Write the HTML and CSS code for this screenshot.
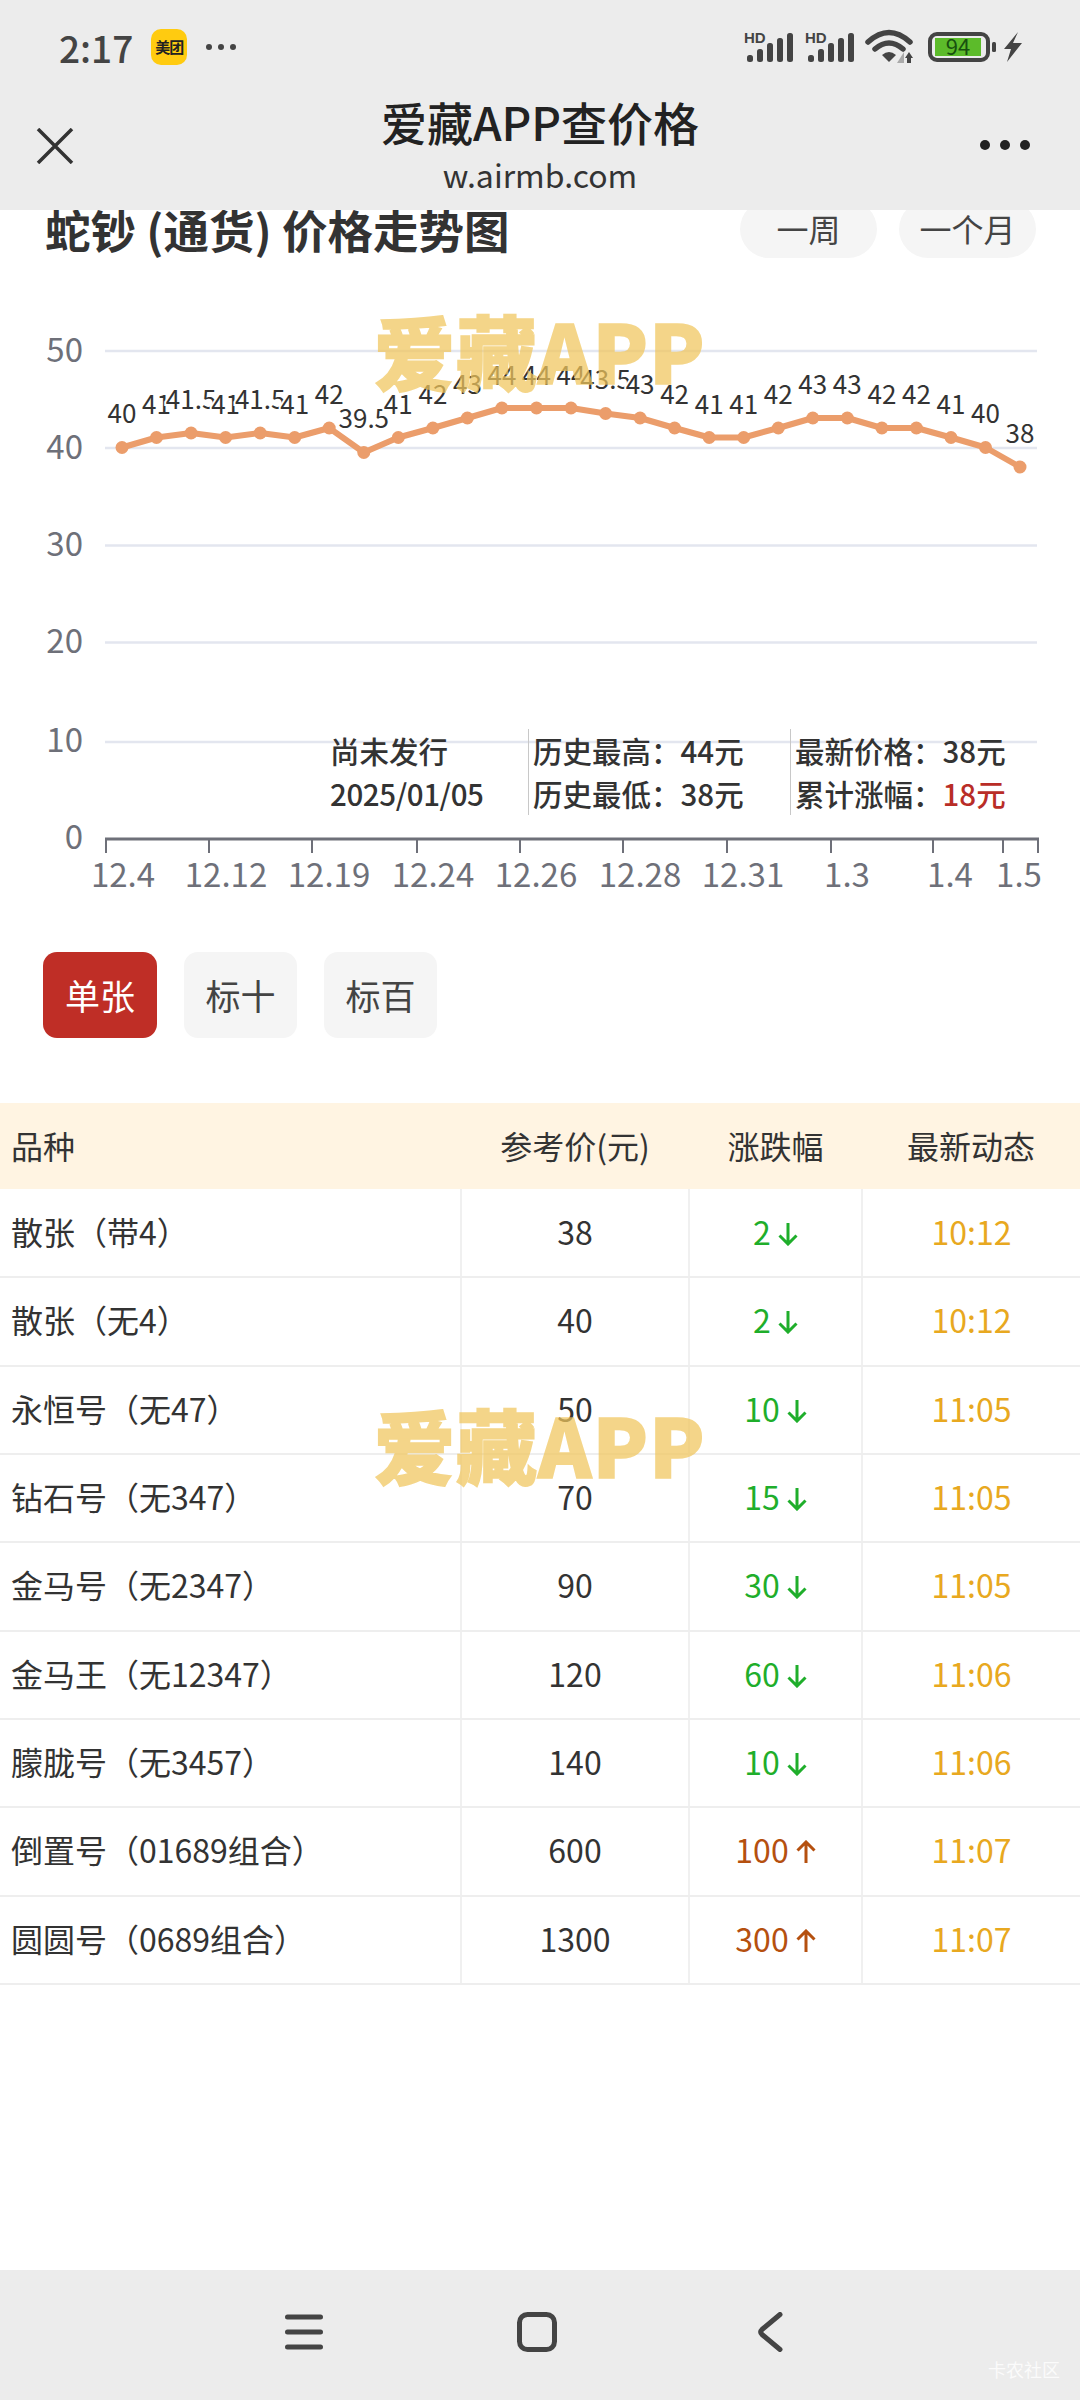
FILE: index.html
```html
<!DOCTYPE html>
<html lang="zh-CN">

<head>
    <meta charset="UTF-8" />
    <meta name="viewport" content="width=device-width, initial-scale=1.0" />
    <title>爱藏APP查价格</title>
    <link rel="stylesheet" href="styles.css">
</head>

<body>
    <svg class="defs" width="0" height="0">
        <symbol id="down" viewBox="0 0 20 24">
            <path d="M10 1V22M1.5 13.5L10 22L18.5 13.5" />
        </symbol>
        <symbol id="up" viewBox="0 0 20 24">
            <path d="M10 23V2M1.5 10.5L10 2L18.5 10.5" />
        </symbol>
    </svg>

    <header class="topbar">
        <div class="status">
            <div class="status-left">
                <span class="time">2:17</span>
                <span class="app-badge">美团</span>
                <svg class="more-small" viewBox="0 0 32 8" width="32" height="8">
                    <circle cx="4" cy="4" r="3" />
                    <circle cx="16" cy="4" r="3" />
                    <circle cx="28" cy="4" r="3" />
                </svg>
            </div>
            <div class="status-right">
                <svg class="sig" viewBox="0 0 50 32" width="50" height="32">
                    <text x="0" y="12" class="hd">HD</text>
                    <rect x="3" y="24" width="6" height="7" rx="2.5" />
                    <rect x="13" y="18" width="6" height="13" rx="2.5" />
                    <rect x="23" y="12" width="6" height="19" rx="2.5" />
                    <rect x="33" y="7" width="6" height="24" rx="2.5" />
                    <rect x="43" y="2" width="6" height="29" rx="2.5" />
                </svg>
                <svg class="sig" viewBox="0 0 50 32" width="50" height="32">
                    <text x="0" y="12" class="hd">HD</text>
                    <rect x="3" y="24" width="6" height="7" rx="2.5" />
                    <rect x="13" y="18" width="6" height="13" rx="2.5" />
                    <rect x="23" y="12" width="6" height="19" rx="2.5" />
                    <rect x="33" y="7" width="6" height="24" rx="2.5" />
                    <rect x="43" y="2" width="6" height="29" rx="2.5" />
                </svg>
                <svg class="wifi" viewBox="0 0 48 34" width="48" height="34">
                    <path class="wifi-arc" d="M2 12Q23 -7 44 12" />
                    <path class="wifi-arc" d="M9 19Q23 7 37 19" />
                    <path d="M16 25Q23 19 30 25L23 32Z" />
                    <path class="wifi-grey" d="M38 22V33H31Z" />
                    <path d="M43 22L47 28H45V33H41V28H39Z" />
                </svg>
                <svg class="battery" viewBox="0 0 94 30" width="94" height="30">
                    <rect class="batt-shell" x="2" y="2" width="58" height="26" rx="7" />
                    <rect class="batt-fill" x="7" y="6" width="46" height="18" />
                    <text x="30" y="23" class="batt-text">94</text>
                    <rect x="64" y="10" width="4" height="10" rx="1.5" />
                    <path d="M90 0L76 17H83L79 30L94 11H85Z" />
                </svg>
            </div>
        </div>
        <div class="titlebar">
            <svg class="close-icon" viewBox="0 0 38 36" width="38" height="36">
                <path d="M2 1L36 35M36 1L2 35" />
            </svg>
            <div class="title-box">
                <div class="title">爱藏APP查价格</div>
                <div class="url">w.airmb.com</div>
            </div>
            <svg class="more-icon" viewBox="0 0 50 10" width="50" height="10">
                <circle cx="5" cy="5" r="5" />
                <circle cx="25" cy="5" r="5" />
                <circle cx="45" cy="5" r="5" />
            </svg>
        </div>
    </header>

    <main class="content">
        <div class="chart-head">
            <h1>蛇钞 (通货) 价格走势图</h1>
            <div class="range-tabs">
                <span class="range-tab">一周</span>
                <span class="range-tab">一个月</span>
            </div>
        </div>

        <div class="chart-wrap">
            <svg class="chart" viewBox="0 258 1080 694" width="1080" height="694">
                <path class="grid" d="M105 351H1037M105 448H1037M105 545.5H1037M105 642.5H1037M105 742H1037" />
                <text class="y-label" x="83" y="362">50</text>
                <text class="y-label" x="83" y="459">40</text>
                <text class="y-label" x="83" y="556">30</text>
                <text class="y-label" x="83" y="653">20</text>
                <text class="y-label" x="83" y="752">10</text>
                <text class="y-label" x="83" y="849">0</text>

                <path class="axis" d="M105 839H1039" />
                <path class="tick" d="M106 839V853M209 839V853M312 839V853M417 839V853M520 839V853M623 839V853M727 839V853M831 839V853M933 839V853M1003 839V853M1038 839V853" />
                <text class="x-label" x="123" y="887">12.4</text>
                <text class="x-label" x="226" y="887">12.12</text>
                <text class="x-label" x="329" y="887">12.19</text>
                <text class="x-label" x="433" y="887">12.24</text>
                <text class="x-label" x="536" y="887">12.26</text>
                <text class="x-label" x="640" y="887">12.28</text>
                <text class="x-label" x="743" y="887">12.31</text>
                <text class="x-label" x="847" y="887">1.3</text>
                <text class="x-label" x="950" y="887">1.4</text>
                <text class="x-label" x="1019" y="887">1.5</text>

                <polyline class="line" points="122,447.5 156.5,437.5 191.1,433 225.6,437.5 260.2,433 294.7,437.5 329.2,428 363.8,452.5 398.3,437.5 432.9,428 467.4,418 501.9,408 536.5,408 571,408 605.6,413.5 640.1,418 674.6,428 709.2,437.5 743.7,437.5 778.3,428 812.8,418 847.3,418 881.9,428 916.4,428 951,437.5 985.5,447.5 1020,467" />
                <g class="dots">
                    <circle cx="122" cy="447.5" r="6.5" />
                    <circle cx="156.5" cy="437.5" r="6.5" />
                    <circle cx="191.1" cy="433" r="6.5" />
                    <circle cx="225.6" cy="437.5" r="6.5" />
                    <circle cx="260.2" cy="433" r="6.5" />
                    <circle cx="294.7" cy="437.5" r="6.5" />
                    <circle cx="329.2" cy="428" r="6.5" />
                    <circle cx="363.8" cy="452.5" r="6.5" />
                    <circle cx="398.3" cy="437.5" r="6.5" />
                    <circle cx="432.9" cy="428" r="6.5" />
                    <circle cx="467.4" cy="418" r="6.5" />
                    <circle cx="501.9" cy="408" r="6.5" />
                    <circle cx="536.5" cy="408" r="6.5" />
                    <circle cx="571" cy="408" r="6.5" />
                    <circle cx="605.6" cy="413.5" r="6.5" />
                    <circle cx="640.1" cy="418" r="6.5" />
                    <circle cx="674.6" cy="428" r="6.5" />
                    <circle cx="709.2" cy="437.5" r="6.5" />
                    <circle cx="743.7" cy="437.5" r="6.5" />
                    <circle cx="778.3" cy="428" r="6.5" />
                    <circle cx="812.8" cy="418" r="6.5" />
                    <circle cx="847.3" cy="418" r="6.5" />
                    <circle cx="881.9" cy="428" r="6.5" />
                    <circle cx="916.4" cy="428" r="6.5" />
                    <circle cx="951" cy="437.5" r="6.5" />
                    <circle cx="985.5" cy="447.5" r="6.5" />
                    <circle cx="1020" cy="467" r="6.5" />
                </g>
                <g class="point-labels">
                    <text x="122" y="423">40</text>
                    <text x="156.5" y="414">41</text>
                    <text x="191.1" y="409">41.5</text>
                    <text x="225.6" y="414">41</text>
                    <text x="260.2" y="409">41.5</text>
                    <text x="294.7" y="414">41</text>
                    <text x="329.2" y="404">42</text>
                    <text x="363.8" y="428">39.5</text>
                    <text x="398.3" y="414">41</text>
                    <text x="432.9" y="404">42</text>
                    <text x="467.4" y="394">43</text>
                    <text x="501.9" y="385">44</text>
                    <text x="536.5" y="385">44</text>
                    <text x="571" y="385">44</text>
                    <text x="605.6" y="389">43.5</text>
                    <text x="640.1" y="394">43</text>
                    <text x="674.6" y="404">42</text>
                    <text x="709.2" y="414">41</text>
                    <text x="743.7" y="414">41</text>
                    <text x="778.3" y="404">42</text>
                    <text x="812.8" y="394">43</text>
                    <text x="847.3" y="394">43</text>
                    <text x="881.9" y="404">42</text>
                    <text x="916.4" y="404">42</text>
                    <text x="951" y="414">41</text>
                    <text x="985.5" y="423">40</text>
                    <text x="1020" y="443">38</text>
                </g>
            </svg>

            <div class="info">
                <div class="info-col info-first">
                    <div>尚未发行</div>
                    <div class="info-date">2025/01/05</div>
                </div>
                <div class="info-col info-mid">
                    <div>历史最高：44元</div>
                    <div>历史最低：38元</div>
                </div>
                <div class="info-col">
                    <div>最新价格：38元</div>
                    <div>累计涨幅：<span class="red">18元</span></div>
                </div>
            </div>
            <div class="watermark wm-chart">爱藏APP</div>
        </div>

        <div class="kinds">
            <span class="kind active">单张</span>
            <span class="kind">标十</span>
            <span class="kind">标百</span>
        </div>

        <div class="table-wrap">
            <table class="prices">
                <colgroup>
                    <col class="c1">
                    <col class="c2">
                    <col class="c3">
                    <col class="c4">
                </colgroup>
                <thead>
                    <tr>
                        <th class="name">品种</th>
                        <th>参考价(元)</th>
                        <th>涨跌幅</th>
                        <th>最新动态</th>
                    </tr>
                </thead>
                <tbody>
                    <tr>
                        <td class="name">散张（带4）</td>
                        <td>38</td>
                        <td class="fall">2<svg class="arrow"><use href="#down" /></svg></td>
                        <td class="when">10:12</td>
                    </tr>
                    <tr>
                        <td class="name">散张（无4）</td>
                        <td>40</td>
                        <td class="fall">2<svg class="arrow"><use href="#down" /></svg></td>
                        <td class="when">10:12</td>
                    </tr>
                    <tr>
                        <td class="name">永恒号（无47）</td>
                        <td>50</td>
                        <td class="fall">10<svg class="arrow"><use href="#down" /></svg></td>
                        <td class="when">11:05</td>
                    </tr>
                    <tr>
                        <td class="name">钻石号（无347）</td>
                        <td>70</td>
                        <td class="fall">15<svg class="arrow"><use href="#down" /></svg></td>
                        <td class="when">11:05</td>
                    </tr>
                    <tr>
                        <td class="name">金马号（无2347）</td>
                        <td>90</td>
                        <td class="fall">30<svg class="arrow"><use href="#down" /></svg></td>
                        <td class="when">11:05</td>
                    </tr>
                    <tr>
                        <td class="name">金马王（无12347）</td>
                        <td>120</td>
                        <td class="fall">60<svg class="arrow"><use href="#down" /></svg></td>
                        <td class="when">11:06</td>
                    </tr>
                    <tr>
                        <td class="name">朦胧号（无3457）</td>
                        <td>140</td>
                        <td class="fall">10<svg class="arrow"><use href="#down" /></svg></td>
                        <td class="when">11:06</td>
                    </tr>
                    <tr>
                        <td class="name">倒置号（01689组合）</td>
                        <td>600</td>
                        <td class="rise">100<svg class="arrow"><use href="#up" /></svg></td>
                        <td class="when">11:07</td>
                    </tr>
                    <tr>
                        <td class="name">圆圆号（0689组合）</td>
                        <td>1300</td>
                        <td class="rise">300<svg class="arrow"><use href="#up" /></svg></td>
                        <td class="when">11:07</td>
                    </tr>
                </tbody>
            </table>
            <div class="watermark wm-table">爱藏APP</div>
        </div>
    </main>

    <footer class="navbar">
        <svg class="nav-icon" viewBox="0 0 38 36" width="38" height="36">
            <path d="M2.5 3H35.5M2.5 18H35.5M2.5 33H35.5" />
        </svg>
        <svg class="nav-icon" viewBox="0 0 40 40" width="40" height="40">
            <rect x="2.5" y="2.5" width="35" height="35" rx="8" />
        </svg>
        <svg class="nav-icon" viewBox="0 0 26 40" width="26" height="40">
            <path d="M23 2.5L5 17.5Q2.5 20 5 22.5L23 37.5" />
        </svg>
        <span class="site-mark">卡农社区</span>
    </footer>
</body>

</html>
```

FILE: styles.css
```css
* {
    box-sizing: border-box;
}

body {
    font-family: "Noto Sans CJK SC", "Noto Sans", sans-serif;
    background-color: #ffffff;
    color: #333;
    margin: 0;
    width: 1080px;
    height: 2400px;
    display: flex;
    flex-direction: column;
    overflow: hidden;
}

.defs {
    position: absolute;
}

/* top bar */
.topbar {
    height: 210px;
    flex: none;
    background-color: #ececec;
    position: relative;
    z-index: 2;
}

.status {
    height: 94px;
    margin-bottom: 2px;
    display: flex;
    justify-content: space-between;
    align-items: center;
    padding: 0 58px 0 59px;
}

.status-left,
.status-right {
    display: flex;
    align-items: center;
}

.time {
    font-size: 37px;
    font-weight: 500;
    color: #444;
}

.app-badge {
    width: 36px;
    height: 36px;
    margin-left: 18px;
    border-radius: 10px;
    background-color: #ffcb10;
    color: #222;
    font-size: 15px;
    font-weight: 700;
    line-height: 36px;
    text-align: center;
    letter-spacing: -1px;
}

.more-small {
    margin-left: 18px;
    fill: #444;
}

.status-right {
    fill: #444;
}

.status-right svg {
    overflow: visible;
}

.status-right .sig + .sig {
    margin-left: 11px;
}

.hd {
    font-family: "Liberation Sans", sans-serif;
    font-size: 15px;
    font-weight: 700;
}

.wifi {
    margin-left: 11px;
}

.wifi-arc {
    fill: none;
    stroke: #444;
    stroke-width: 5.5px;
    stroke-linecap: round;
}

.wifi-grey {
    fill: #aaa;
}

.battery {
    margin-left: 14px;
}

.batt-shell {
    fill: none;
    stroke: #444;
    stroke-width: 4px;
}

.batt-fill {
    fill: #5cbb2a;
}

.batt-text {
    font-size: 22px;
    fill: #17500f;
    text-anchor: middle;
}

.titlebar {
    height: 114px;
    display: grid;
    grid-template-columns: 1fr auto 1fr;
    padding: 0 50px;
}

.close-icon {
    margin: 32px 0 0 -14px;
    fill: none;
    stroke: #333;
    stroke-width: 3.5px;
}

.title-box {
    text-align: center;
}

.title {
    font-size: 46px;
    font-weight: 500;
    line-height: 54px;
    margin-top: -2px;
    color: #222;
}

.url {
    font-size: 32px;
    line-height: 44px;
    margin-top: 4px;
    color: #333;
}

.more-icon {
    margin-top: 44px;
    justify-self: end;
    fill: #222;
}

/* page */
.content {
    flex: 1;
    min-height: 0;
}

.chart-head {
    height: 58px;
    margin-top: -10px;
    padding: 0 44px 0 45px;
    display: flex;
    justify-content: space-between;
    align-items: center;
}

h1 {
    margin: 0;
    font-size: 45.5px;
    font-weight: 700;
    line-height: 58px;
    color: #333;
}

.range-tabs {
    display: flex;
    gap: 22px;
}

.range-tab {
    width: 137px;
    height: 58px;
    border-radius: 29px;
    background-color: #f5f5f5;
    color: #444;
    font-size: 32px;
    line-height: 56px;
    text-align: center;
}

.chart-wrap {
    height: 694px;
    position: relative;
}

.chart {
    display: block;
    font-family: "Noto Sans CJK SC", "Noto Sans", sans-serif;
}

.grid {
    fill: none;
    stroke: #e3e6ef;
    stroke-width: 2.5px;
}

.axis {
    stroke: #6e7079;
    stroke-width: 3px;
}

.tick {
    stroke: #6e7079;
    stroke-width: 2px;
}

.y-label {
    font-size: 33px;
    fill: #6e7079;
    text-anchor: end;
}

.x-label {
    font-size: 33px;
    fill: #6e7079;
    text-anchor: middle;
}

.line {
    fill: none;
    stroke: #eb9d6b;
    stroke-width: 6px;
    stroke-linejoin: round;
}

.dots {
    fill: #eb9d6b;
}

.point-labels text {
    font-size: 26px;
    fill: #333;
    text-anchor: middle;
    stroke: #ffffff;
    stroke-width: 4px;
    paint-order: stroke;
}

.info {
    position: absolute;
    left: 330px;
    top: 471px;
    display: flex;
    font-size: 29.5px;
    font-weight: 500;
    line-height: 43px;
    color: #333;
}

.info-date {
    letter-spacing: -0.4px;
}

.info-col {
    height: 86px;
    padding-left: 4px;
    border-left: 1px solid #c8c8c8;
    white-space: nowrap;
}

.info-first {
    width: 198px;
    padding-left: 0;
    border-left: none;
}

.info-mid {
    width: 262px;
}

.red {
    color: #b92d27;
}

.watermark {
    position: absolute;
    left: 374px;
    font-size: 81px;
    font-weight: 900;
    line-height: 80px;
    letter-spacing: 1px;
    color: #f1c65c;
    -webkit-text-stroke: 1.5px #f1c65c;
    opacity: 0.72;
    white-space: nowrap;
}

.wm-chart {
    top: 51px;
}

.wm-table {
    top: 300px;
}

.kinds {
    display: flex;
    gap: 27px;
    padding-left: 43px;
}

.kind {
    width: 113px;
    height: 86px;
    border-radius: 14px;
    background-color: #f5f5f5;
    color: #444;
    font-size: 35px;
    line-height: 86px;
    text-align: center;
}

.kind.active {
    width: 114px;
    background-color: #bf2e26;
    color: #ffffff;
}

/* price table */
.table-wrap {
    margin-top: 65px;
    position: relative;
}

.prices {
    width: 1080px;
    table-layout: fixed;
    border-collapse: collapse;
    font-size: 32px;
    color: #333;
}

.c1 {
    width: 461px;
}

.c2 {
    width: 228px;
}

.c3 {
    width: 173px;
}

.c4 {
    width: 218px;
}

.prices th {
    height: 86px;
    padding: 0 0 3px;
    background-color: #fff4e2;
    font-weight: 400;
    text-align: center;
}

.prices td {
    height: 88.33px;
    padding: 0 0 4px;
    text-align: center;
    border-bottom: 2px solid #eeeeee;
    border-left: 2px solid #f0f0f0;
}

.prices .name {
    padding-left: 11px;
    text-align: left;
    border-left: none;
}

.fall {
    color: #1fae2b;
}

.rise {
    color: #b5500f;
}

.when {
    color: #e8a820;
}

.arrow {
    width: 20px;
    height: 24px;
    margin-left: 7px;
    vertical-align: -1px;
    fill: none;
    stroke: currentColor;
    stroke-width: 3px;
}

/* bottom bar */
.navbar {
    height: 130px;
    flex: none;
    background-color: #ececec;
    padding: 0 0 6px 187px;
    display: grid;
    grid-template-columns: repeat(3, 233px);
    justify-items: center;
    align-items: center;
    position: relative;
}

.nav-icon {
    fill: none;
    stroke: #444;
    stroke-width: 5px;
    stroke-linecap: round;
    stroke-linejoin: round;
}

.site-mark {
    position: absolute;
    right: 20px;
    bottom: 18px;
    font-size: 18px;
    color: #ffffff;
    opacity: 0.8;
}
```
